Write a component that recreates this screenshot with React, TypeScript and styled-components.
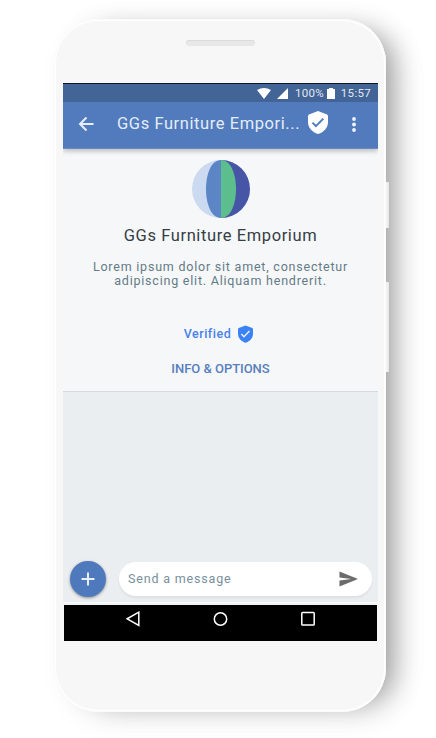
import React from "react";
import styled, { createGlobalStyle } from "styled-components";

const GlobalStyle = createGlobalStyle`
  * { box-sizing: border-box; }
  html, body { margin: 0; background: #fff; }
  body { font-family: Roboto, "Liberation Sans", sans-serif; overflow: hidden; }
  svg { display: block; flex: none; }
`;

const Stage = styled.main`
  width: 436px;
  height: 738px;
  padding: 19px 0 0 54px;
  overflow: hidden;
`;

const Phone = styled.div`
  position: relative;
  width: 332px;
  height: 693px;
  padding-left: 9px;
  border-radius: 44px;
  background: #f7f7f7;
  box-shadow:
    inset 0 0 0 1px #fafafa,
    inset 0 0 0 2px #fff,
    18px 2px 28px -12px rgba(0, 0, 0, 0.38),
    14px 6px 34px -2px rgba(0, 0, 0, 0.07);
`;

const SideButton = styled.span<{ $top: number; $height: number }>`
  position: absolute;
  left: 332px;
  top: ${(p) => p.$top}px;
  width: 3px;
  height: ${(p) => p.$height}px;
  border-radius: 0 1px 1px 0;
  background: linear-gradient(90deg, #f5f5f5, #e8e8e8);
`;

const Bezel = styled.div`
  height: 64px;
  padding: 21px 0 0 123px;
`;

const Speaker = styled.div`
  width: 69px;
  height: 6px;
  border-radius: 3px;
  background: #e8e8e8;
  box-shadow: inset 0 1px 1px #dadada;
`;

const Screen = styled.div`
  display: flex;
  flex-direction: column;
  width: 315px;
  height: 519px;
  background: #ebeef1;
`;

const StatusBar = styled.div`
  display: flex;
  align-items: center;
  height: 19px;
  padding: 0 7px 0 194px;
  border-top: 1px solid #111722;
  background: #436496;
  color: #e0e8f3;
  font-size: 11.5px;
  letter-spacing: 0.3px;
  white-space: nowrap;
`;

const StatusIcon = styled.svg<{ $gap: number }>`
  margin-right: ${(p) => p.$gap}px;
`;

const Percent = styled.span`
  width: 32px;
`;

const AppBar = styled.header`
  position: relative;
  display: flex;
  align-items: center;
  height: 47px;
  padding: 0 16px 4px 15px;
  background: #517bbd;
  border-bottom: 1px solid #6b8cc2;
  box-shadow: 0 2px 5px rgba(0, 0, 0, 0.25);
  clip-path: inset(0 0 -12px 0);
`;

const Title = styled.h1`
  width: 191px;
  margin: 2px 0 0 23px;
  color: #e4ecf8;
  font-size: 16.5px;
  font-weight: 400;
  line-height: 20px;
  letter-spacing: 0.58px;
  white-space: nowrap;
`;

const TitleShield = styled.span`
  margin-top: -2px;
`;

const MoreIcon = styled.svg`
  margin: 2px 0 0 23px;
`;

const Profile = styled.section`
  display: flex;
  flex-direction: column;
  align-items: center;
  height: 243px;
  padding-top: 11px;
  border-bottom: 1px solid #d3d9dd;
  background: #f6f7f9;
  text-align: center;
`;

const Name = styled.h2`
  margin: 8px 0 0;
  color: #353e44;
  font-size: 16.5px;
  font-weight: 400;
  line-height: 20px;
  letter-spacing: 0.6px;
`;

const Description = styled.p`
  margin: 14px 0 0;
  color: #647b86;
  font-size: 12.5px;
  line-height: 14.4px;
  letter-spacing: 0.78px;
  white-space: pre;
`;

const Verified = styled.div`
  display: flex;
  align-items: center;
  gap: 7px;
  height: 20px;
  margin: 35px 4px 0 0;
  color: #4782ee;
  font-size: 12.5px;
  font-weight: 500;
  letter-spacing: 0.5px;
`;

const OptionsLink = styled.a`
  margin-top: 17px;
  color: #587fbd;
  font-size: 13px;
  font-weight: 500;
  line-height: 16px;
  letter-spacing: -0.03px;
`;

const Chat = styled.div`
  flex: 1;
`;

const Composer = styled.div`
  display: flex;
  align-items: center;
  height: 43px;
  padding: 0 6px 4px 7px;
`;

const AddButton = styled.button`
  display: grid;
  place-items: center;
  width: 36px;
  height: 36px;
  margin-right: 1px;
  padding: 0 1px 0 0;
  border: 0;
  border-radius: 50%;
  background: #4f79bd;
  box-shadow: 0 1px 3px rgba(0, 0, 0, 0.4);
`;

const MessageField = styled.div`
  display: flex;
  align-items: center;
  justify-content: space-between;
  width: 253px;
  height: 34px;
  margin-left: 12px;
  padding: 0 14px 0 9px;
  border-radius: 17px;
  background: #fff;
  box-shadow: 0 2px 2px rgba(80, 90, 100, 0.09);
  color: #78909c;
  font-size: 12.5px;
  letter-spacing: 0.82px;
`;

const ScreenEdge = styled.div`
  width: 315px;
  height: 3px;
  border-top: 1px solid #fafafa;
  background: #f1f2f3;
`;

const NavBar = styled.nav`
  display: flex;
  justify-content: space-between;
  width: 313px;
  height: 36px;
  margin-left: 1px;
  padding: 6px 62px 0 62px;
  background: #000;
`;

const Shield = ({ width, height, color, check }: { width: number; height: number; color: string; check: string }) => (
  <svg width={width} height={height} viewBox="0 0 20 23">
    <path d="M10 0 19 3.500Q20 4 20 5v6c0 5.500-4 10.200-10 12C4 21.200 0 16.500 0 11V5q0-1 1-1.500Z" fill={color} />
    <path d="m4.500 11.600 3.400 3.500 7.400-7.500" fill="none" stroke={check} strokeWidth="2" />
  </svg>
);

const Avatar = () => (
  <svg width="58" height="58" viewBox="0 0 58 58">
    <circle cx="29" cy="29" r="29" fill="#cbdaf1" />
    <path d="M29 0a29 29 0 0 1 0 58Z" fill="#4655a5" />
    <path d="M29 0C9 0 9 58 29 58Z" fill="#5c85c5" />
    <path d="M29 0C49 0 49 58 29 58Z" fill="#5bbe8c" />
  </svg>
);

export default function App() {
  return (
    <>
      <GlobalStyle />
      <Stage>
        <Phone>
          <SideButton $top={163} $height={46} />
          <SideButton $top={263} $height={90} />
          <Bezel>
            <Speaker />
          </Bezel>
          <Screen>
            <StatusBar>
              <StatusIcon $gap={6} width="14" height="11" viewBox="0 0 14 11">
                <path d="M0 2Q7-2 14 2L7 11Z" fill="#fff" />
              </StatusIcon>
              <StatusIcon $gap={7} width="11" height="11" viewBox="0 0 11 11">
                <path d="M11 0v11H0Z" fill="#fff" />
              </StatusIcon>
              <Percent>100%</Percent>
              <StatusIcon $gap={6} width="8" height="11" viewBox="0 0 8 11">
                <path d="M2 0h4v1h2v10H0V1h2Z" fill="#fff" />
              </StatusIcon>
              <span>15:57</span>
            </StatusBar>
            <AppBar>
              <svg width="16" height="18" viewBox="0 0 16 18" fill="none" stroke="#e7eef9" strokeWidth="2">
                <path d="M15.500 10H2M8.500 3.500 2 10 8.500 16.500" />
              </svg>
              <Title>GGs Furniture Empori...</Title>
              <TitleShield>
                <Shield width={20} height={23} color="#fff" check="#517bbd" />
              </TitleShield>
              <MoreIcon width="6" height="16" viewBox="0 0 6 16" fill="#f0f4fb">
                <circle cx="3" cy="3" r="1.900" />
                <circle cx="3" cy="8.500" r="1.900" />
                <circle cx="3" cy="14" r="1.900" />
              </MoreIcon>
            </AppBar>
            <Profile>
              <Avatar />
              <Name>GGs Furniture Emporium</Name>
              <Description>{"Lorem ipsum dolor sit amet, consectetur\nadipiscing elit. Aliquam hendrerit."}</Description>
              <Verified>
                Verified
                <Shield width={15} height={18} color="#3b82f6" check="#eaf2ff" />
              </Verified>
              <OptionsLink>INFO &amp; OPTIONS</OptionsLink>
            </Profile>
            <Chat />
            <Composer>
              <AddButton aria-label="Add">
                <svg width="14" height="14" viewBox="0 0 14 14" stroke="#e8effa" strokeWidth="2">
                  <path d="M7 .5v13M.5 7h13" />
                </svg>
              </AddButton>
              <MessageField>
                Send a message
                <svg width="19" height="16" viewBox="0 0 20 16">
                  <path d="M.5 0 20 8 .5 16V9.500L13 8 .5 6.500Z" fill="#6b6b6b" />
                </svg>
              </MessageField>
            </Composer>
          </Screen>
          <ScreenEdge />
          <NavBar>
            <svg width="14" height="16" viewBox="0 0 14 16" fill="none" stroke="#fff" strokeWidth="1.500">
              <path d="M12.800 1.200v13.200L1.200 7.800Z" />
            </svg>
            <svg width="15" height="16" viewBox="0 0 15 16" fill="none" stroke="#fff" strokeWidth="1.500">
              <circle cx="7.500" cy="8" r="6.200" />
            </svg>
            <svg width="14" height="16" viewBox="0 0 14 16" fill="none" stroke="#fff" strokeWidth="1.500">
              <rect x=".8" y="1.500" width="12.400" height="12.600" rx=".8" />
            </svg>
          </NavBar>
        </Phone>
      </Stage>
    </>
  );
}
